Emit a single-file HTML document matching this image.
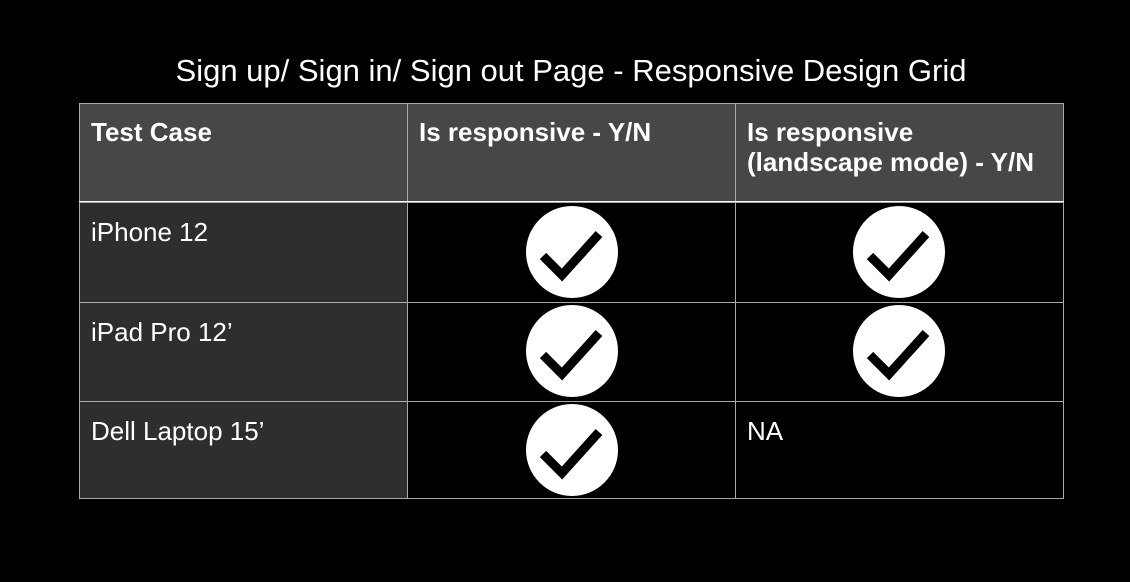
<!DOCTYPE html>
<html><head><style>
body{margin:0;width:1130px;height:582px;background:#000;position:relative;overflow:hidden;font-family:"Liberation Sans",Arial,sans-serif;color:#fff}
.t{position:absolute;left:0;width:1142px;text-align:center;top:55px;font-size:31px;line-height:31px;white-space:nowrap}
.c{position:absolute;box-sizing:border-box;border:1px solid #a8a8a8}
.h{background:#474747;font-weight:bold}
.f{background:#2e2e2e}
.k{background:#000}
.tx{position:absolute;left:11px;top:13px;font-size:26px;line-height:30px;white-space:nowrap}
.b .tx{top:14px}
svg{position:absolute}
</style></head><body>
<div class="t">Sign up/ Sign in/ Sign out Page - Responsive Design Grid</div>
<div class="c h" style="left:79px;top:103px;width:329px;height:100px"><div class="tx">Test Case</div></div>
<div class="c h" style="left:407px;top:103px;width:329px;height:100px"><div class="tx">Is responsive - Y/N</div></div>
<div class="c h" style="left:735px;top:103px;width:329px;height:100px"><div class="tx">Is responsive<br>(landscape mode) - Y/N</div></div>
<div style="position:absolute;left:79px;top:201px;width:985px;height:2px;background:#fff"></div>
<div class="c f b" style="left:79px;top:202px;width:329px;height:101px"><div class="tx">iPhone 12</div></div>
<div class="c k" style="left:407px;top:202px;width:329px;height:101px"></div>
<div class="c k" style="left:735px;top:202px;width:329px;height:101px"></div>
<div class="c f b" style="left:79px;top:302px;width:329px;height:100px"><div class="tx">iPad Pro 12’</div></div>
<div class="c k" style="left:407px;top:302px;width:329px;height:100px"></div>
<div class="c k" style="left:735px;top:302px;width:329px;height:100px"></div>
<div class="c f b" style="left:79px;top:401px;width:329px;height:98px"><div class="tx">Dell Laptop 15’</div></div>
<div class="c k" style="left:407px;top:401px;width:329px;height:98px"></div>
<div class="c k b" style="left:735px;top:401px;width:329px;height:98px"><div class="tx">NA</div></div>
<svg width="0" height="0"><defs><g id="ck"><circle cx="0" cy="0" r="46" fill="#fff"/><path d="M-29 4 L-10 23 L27 -18" fill="none" stroke="#000" stroke-width="9"/></g></defs></svg>
<svg style="left:0;top:0" width="1130" height="582">
<use href="#ck" x="572" y="252"/>
<use href="#ck" x="899" y="252"/>
<use href="#ck" x="572" y="351"/>
<use href="#ck" x="899" y="351"/>
<use href="#ck" x="572" y="450"/>
</svg>
</body></html>
